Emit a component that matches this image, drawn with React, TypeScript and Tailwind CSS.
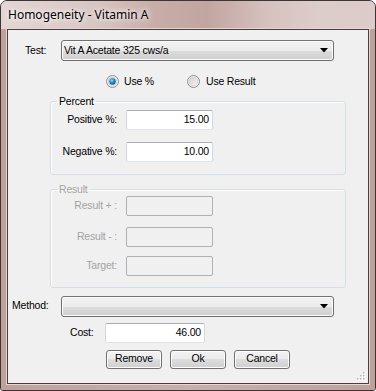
import React from "react";

const font = "font-['Liberation_Sans',Arial,sans-serif]";
const txt = "text-[10.5px] tracking-[-0.2px]";

const Radio: React.FC<{ checked?: boolean }> = ({ checked }) => (
  <svg width="13" height="13" viewBox="0 0 13 13" className="shrink-0">
    <defs>
      <linearGradient id={checked ? "rgOn" : "rgOff"} x1="0" y1="0" x2="1" y2="1">
        <stop offset="0" stopColor="#cfcfcf" />
        <stop offset="1" stopColor="#f6f6f6" />
      </linearGradient>
      <radialGradient id="dot" cx="0.4" cy="0.35" r="0.7">
        <stop offset="0" stopColor="#8fdcff" />
        <stop offset="0.5" stopColor="#1d8ad0" />
        <stop offset="1" stopColor="#0e4d7e" />
      </radialGradient>
    </defs>
    <circle cx="6.5" cy="6.5" r="6" fill="#f4f4f4" stroke="#8f8f8f" />
    <circle
      cx="6.5"
      cy="6.5"
      r="4.5"
      fill={checked ? "url(#rgOn)" : "url(#rgOff)"}
      stroke="#c6c6c6"
      strokeWidth="0.6"
    />
    {checked && <circle cx="6.5" cy="6.5" r="3.2" fill="url(#dot)" />}
  </svg>
);

const Combo: React.FC<{ value?: string }> = ({ value }) => (
  <div className="w-[273px] h-[21px] flex items-center justify-between rounded-[3px] border border-[#707070] bg-[linear-gradient(#f2f2f2_0%,#ebebeb_50%,#dddddd_50%,#cfcfcf_100%)] shadow-[inset_0_0_0_1px_#fbfbfb] pl-[2px] pr-[5px]">
    <span className={`${txt} text-black`}>{value}</span>
    <svg width="8" height="5" viewBox="0 0 8 5">
      <path d="M0 0H8L4 4.5Z" fill="#000" />
    </svg>
  </div>
);

const TextBox: React.FC<{ value?: string; disabled?: boolean; wide?: boolean }> = ({
  value,
  disabled,
  wide,
}) => (
  <div
    className={`${wide ? "w-[100px]" : "w-[87px]"} h-[20px] flex items-center justify-end pr-[3px] rounded-[2px] border ${txt} text-black ${
      disabled
        ? "bg-[#f0f0f0] border-[#afb1b4]"
        : "bg-white border-[#abadb3] border-l-[#d5d7dc] border-r-[#d5d7dc] border-b-[#dfe3e8]"
    }`}
  >
    {value}
  </div>
);

const Button: React.FC<{ label: string }> = ({ label }) => (
  <div
    className={`w-[56px] h-[19px] flex items-center justify-center rounded-[3px] border border-[#707070] bg-[linear-gradient(#f2f2f2_0%,#ebebeb_50%,#dddddd_50%,#cfcfcf_100%)] shadow-[inset_0_0_0_1px_#fcfcfc] ${txt} text-black`}
  >
    {label}
  </div>
);

const FieldRow: React.FC<{
  label: string;
  value?: string;
  disabled?: boolean;
  className?: string;
}> = ({ label, value, disabled, className }) => (
  <div className={`flex items-center ${className ?? ""}`}>
    <span
      className={`w-[66px] text-right ${txt} ${
        disabled ? "text-[#a3a3a3]" : "text-black"
      }`}
    >
      {label}
    </span>
    <div className="ml-[9px]">
      <TextBox value={value} disabled={disabled} />
    </div>
  </div>
);

export default function App() {
  return (
    <div
      className={`w-[376px] h-[391px] flex flex-col rounded-t-[7px] rounded-b-[3px] border border-[#3d3535] bg-[#bfa19c] overflow-hidden shadow-[inset_0_0_0_1px_#e6d9d7] ${font}`}
    >
      {/* title bar */}
      <div className="h-[28px] shrink-0 flex items-center pl-[7px] bg-[linear-gradient(90deg,#e3d6d4_0%,#d8c6c3_25%,#c7aca7_42%,#c2a5a0_55%,#d6c3c0_72%,#ddcdca_85%,#dccbc8_100%)]">
        <span className="font-['Noto_Sans',sans-serif] text-[12px] text-black [text-shadow:0_0_8px_#fff,0_0_4px_#fff]">
          Homogeneity - Vitamin A
        </span>
      </div>

      {/* frame + client area */}
      <div className="flex-1 flex px-[6px] pb-[6px] bg-[linear-gradient(90deg,#bfa19c,#c9aeaa_50%,#bfa19c)]">
        <div className="flex-1 flex flex-col border border-[#4a3d3b] bg-[#f0f0f0] shadow-[0_0_0_1px_#e4d7d5] relative">
          {/* Test */}
          <div className="flex items-center mt-[10px] pl-[17px]">
            <span className={`w-[36px] ${txt} text-black`}>Test:</span>
            <Combo value="Vit A Acetate 325 cws/a" />
          </div>

          {/* radios */}
          <div className={`flex items-center mt-[13px] pl-[98px] ${txt} text-black`}>
            <Radio checked />
            <span className="ml-[5px] w-[63px]">Use %</span>
            <Radio />
            <span className="ml-[6px]">Use Result</span>
          </div>

          {/* Percent */}
          <fieldset className="ml-[42px] mt-[5px] w-[296px] border border-[#d5dfe5] rounded-[3px] pb-[12px] shadow-[inset_1px_1px_0_#fff]">
            <legend className={`ml-[6px] px-[2px] ${txt} leading-[13px] text-black`}>
              Percent
            </legend>
            <FieldRow label="Positive %:" value="15.00" className="mt-[2px]" />
            <FieldRow label="Negative %:" value="10.00" className="mt-[12px]" />
          </fieldset>

          {/* Result */}
          <fieldset className="ml-[42px] mt-[8px] w-[296px] border border-[#d5dfe5] rounded-[3px] pb-[11px] shadow-[inset_1px_1px_0_#fff]">
            <legend className={`ml-[6px] px-[2px] ${txt} leading-[13px] text-[#a3a3a3]`}>
              Result
            </legend>
            <FieldRow label="Result + :" disabled />
            <FieldRow label="Result - :" disabled className="mt-[11px]" />
            <FieldRow label="Target:" disabled className="mt-[9px]" />
          </fieldset>

          {/* Method */}
          <div className="flex items-center mt-[8px] pl-[4px]">
            <span className={`w-[49px] ${txt} text-black`}>Method:</span>
            <Combo />
          </div>

          {/* Cost */}
          <div className="flex items-center mt-[6px] pl-[62px]">
            <span className={`w-[35px] ${txt} text-black`}>Cost:</span>
            <TextBox value="46.00" wide />
          </div>

          {/* buttons */}
          <div className="flex gap-[8px] mt-[7px] pl-[98px]">
            <Button label="Remove" />
            <Button label="Ok" />
            <Button label="Cancel" />
          </div>

          {/* size grip */}
          <svg
            className="absolute right-[2px] bottom-[2px]"
            width="10"
            height="10"
            viewBox="0 0 10 10"
          >
            {[
              [7, 1],
              [4, 4],
              [7, 4],
              [1, 7],
              [4, 7],
              [7, 7],
            ].map(([x, y], i) => (
              <g key={i}>
                <rect x={x + 1} y={y + 1} width="1.5" height="1.5" fill="#fff" />
                <rect x={x} y={y} width="1.5" height="1.5" fill="#b8b8b8" />
              </g>
            ))}
          </svg>
        </div>
      </div>
    </div>
  );
}
